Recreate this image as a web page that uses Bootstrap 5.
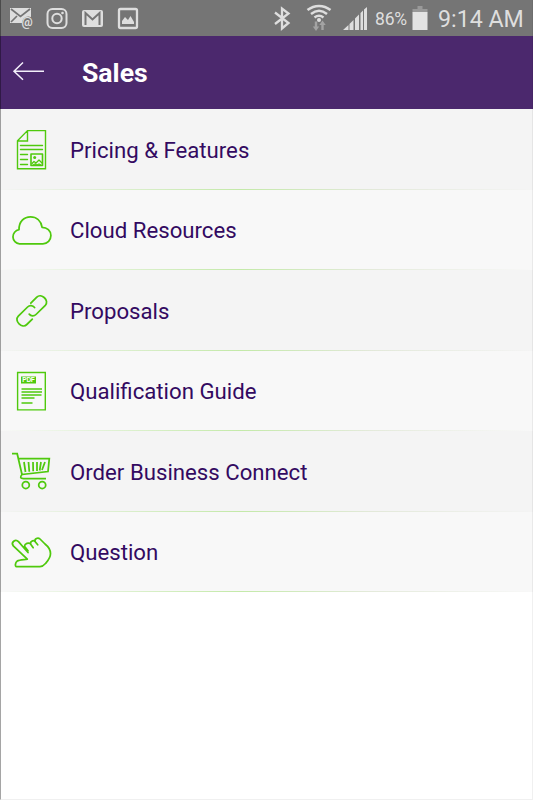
<!DOCTYPE html>
<html lang="en">
<head>
<meta charset="utf-8">
<meta name="viewport" content="width=device-width, initial-scale=1">
<title>Sales</title>
<link href="https://cdn.jsdelivr.net/npm/bootstrap@5.3.0/dist/css/bootstrap.min.css" rel="stylesheet">
<style>
body{font-family:Roboto,sans-serif;background:#fff;height:800px;overflow:hidden}
.screen-edge{inset:0;border-left:1px solid rgba(0,0,0,.35);border-right:1px solid rgba(0,0,0,.06);border-bottom:1px solid rgba(0,0,0,.06);pointer-events:none}
.status-strip{height:36px;background:#757575;color:#dedede}
.status-strip svg{display:block;flex:none}
.batt-text{font-size:17.5px;line-height:36px;width:36px;flex:none;margin-left:5px;margin-right:1px;padding-top:2px;white-space:nowrap;letter-spacing:-.2px}
.clock-text{font-size:23.2px;line-height:36px;margin-left:10px;padding-top:1px;white-space:nowrap}
.title-strip{height:73px;background:#4b286d;color:#fff}
.title-strip h1{font-size:26.6px;line-height:32px;font-weight:700;margin-left:22px;padding-top:1px}
.menu-row{height:80.5px;background:#f4f4f4;color:#330a61;font-size:22.2px;border:0;padding:0}
.menu-row:nth-child(even){background:#f8f8f8}
.menu-row::after{content:"";position:absolute;left:0;right:0;bottom:0;height:1px;background:linear-gradient(90deg,rgba(190,232,160,0),rgba(190,232,160,.9) 45%,rgba(215,225,200,.6) 70%,rgba(215,225,200,0))}
.menu-row svg{width:60px;height:80px;flex:none;fill:none;stroke:#4fc90d;stroke-width:1.75;stroke-linejoin:round;stroke-linecap:round}
.menu-row span{margin-left:10px;padding-top:3px;white-space:nowrap}
.menu-row:nth-child(even) span{padding-top:2px}
.pdf-tag{font:bold 6.5px "Liberation Sans",sans-serif;fill:#fff;stroke:none}
</style>
</head>
<body class="position-relative">
<div class="status-strip d-flex align-items-center">
  <svg width="260" height="36" fill="none" stroke="#dedede" stroke-width="2">
    <path d="M10 8h21v9c-5-2-9 2-9 6H10z" fill="#dedede" stroke="none"/>
    <path d="M11 9l9.500 7.500L30 9M11 22l6-6" stroke="#757575" stroke-width="1.700"/>
    <text x="21.500" y="26" font-size="12.500" font-weight="700" fill="#dedede" stroke="none">@</text>
    <rect x="47.500" y="9" width="19" height="19" rx="5"/>
    <circle cx="57" cy="18.500" r="4.700"/>
    <circle cx="62.500" cy="13" r="1.300" fill="#dedede" stroke="none"/>
    <rect x="82" y="10" width="21" height="17" rx="2" fill="#dedede" stroke="none"/>
    <path d="M85.500 25V13l7 6.500 7-6.500v12" stroke="#757575" stroke-width="2"/>
    <rect x="119" y="9" width="18" height="19" rx="1.500" stroke-width="2.300"/>
    <path d="M122 24v-3l3-4 3 3 2.500-4 3.500 6v2z" fill="#dedede" stroke="none"/>
  </svg>
  <svg width="110" height="36" viewBox="260 0 110 36" fill="none" stroke="#dedede" stroke-width="2.300">
    <path d="M275 12.500l13.500 10.500-6.500 5.500V8.500l6.500 5L275 24"/>
    <g stroke-width="2.500"><path d="M307.500 10c7-5.500 16-5.500 23 0M311 14c5-4 11-4 16 0M314.500 17.500c3-2.300 6-2.300 9 0"/></g>
    <circle cx="319" cy="20" r="2" fill="#dedede" stroke="none"/>
    <path d="M316 21.500v6M322.500 30v-6" stroke="#a3a3a3" stroke-width="2.400"/><path d="M312.800 26.500h6.400L316 31zM319.300 25h6.400l-3.200-4.500z" fill="#a3a3a3" stroke="none"/>
    <g fill="#dedede" stroke="none"><path d="M343 30l5.500-5v5zM349.500 30v-6l4-4V30zM355 30V18.500l4-4V30z"/><path d="M360.500 30V13l2.500-2.500V30zM364 30V9.500l3-2.500V30z"/></g>
  </svg>
  <div class="batt-text">86%</div>
  <svg width="16" height="36" viewBox="412 0 16 36"><path d="M417.500 6h5v3h5v3.500h-15V9h5z" fill="#999"/><path d="M412.500 12h15v18h-15z" fill="#e4e4e4"/></svg>
  <div class="clock-text">9:14 AM</div>
</div>
<header class="title-strip d-flex align-items-center">
  <svg width="60" height="73" viewBox="0 36 60 73" fill="none" stroke="#f3effa" stroke-width="1.500"><path d="M44 71.200H14M23 62.500l-9 8.700 9 8.600"/></svg>
  <h1 class="mb-0">Sales</h1>
</header>
<main class="list-group list-group-flush rounded-0">
  <a class="menu-row list-group-item d-flex align-items-center">
    <svg viewBox="0 109 60 80"><path stroke-linejoin="miter" stroke-width="1.400" d="M27.500 130.600h18v38.200h-28v-28zV141h-10M20.500 145.500h22M20.500 149.500h22M20.500 154.500h7M20.500 159.500h7M20.500 164.500h7"/><rect x="31" y="154" width="11.500" height="11.500" stroke-width="1.600"/><circle cx="34.700" cy="157.500" r="1.500" fill="#4fc90d" stroke="none"/><path d="M32 163.500l2-2 2 1.500 3-3 3 3M33 165l2-1 2 1 2-1 2 1" stroke-width="1.300"/></svg>
    <span>Pricing &amp; Features</span></a>
  <a class="menu-row list-group-item d-flex align-items-center">
    <svg viewBox="0 189.500 60 80"><path d="M19.500 243.300a7.100 7.100 0 0 1-.5-14.100C19 221 24 216.400 30.500 216.400c6 0 10.500 4 11.600 10.400 5 0 8.800 3.500 8.800 8.200s-3.400 8.300-8 8.300z"/></svg>
    <span>Cloud Resources</span></a>
  <a class="menu-row list-group-item d-flex align-items-center">
    <svg viewBox="0 270 60 80"><path d="M30.800 303.200l6-6.100c4.500-4.500 13 3.500 8.500 8.200l-9.300 9.200c-2 2-5 1.700-6.800-.3M32.300 319.200l-5.500 5.300c-4.600 4.500-13.200-3.500-8.500-8.300l9.300-9.200c2-2 5.200-1.700 7 .5"/></svg>
    <span>Proposals</span></a>
  <a class="menu-row list-group-item d-flex align-items-center">
    <svg viewBox="0 350.500 60 80"><path stroke-linejoin="miter" stroke-width="1.400" d="M17.600 372h27.700v37.400H17.600z"/><path d="M21 376h15v7H21z" fill="#4fc90d" stroke="none"/><text class="pdf-tag" x="22.300" y="381.900" textLength="12.500">PDF</text><path stroke-width="1.300" stroke-linecap="butt" d="M21.500 388.500h20.500M21.500 391.500h20.500M21.500 394.500h20M21.500 397.500h13M21.500 402.500h11"/></svg>
    <span>Qualification Guide</span></a>
  <a class="menu-row list-group-item d-flex align-items-center">
    <svg viewBox="0 431 60 80"><path stroke-linecap="butt" stroke-linejoin="miter" d="M12 453.700h5.200L22 474.500M18.300 458.500h31L48 471.500l-26 3c-2.500 3-1.500 4 1.500 4H46M24 462l1.500 10M28.500 462l.8 9.700M33 462l.2 9.200M37 462v9M41 462l-1.300 8.500M45 462l-3 8"/><circle cx="25.800" cy="485" r="3.500"/><circle cx="42.200" cy="485" r="3.500"/></svg>
    <span>Order Business Connect</span></a>
  <a class="menu-row list-group-item d-flex align-items-center">
    <svg viewBox="0 511.500 60 80"><path d="M28 552.500l-4-4.500-5.500-6.300c-3-3.200-8 .5-5.200 4.200l14 13.300c-4 .6-8 .7-10 1.800-2.200 1.400-2.500 5.700-.8 5.700H40c2.500 0 4-1.500 5.500-3.200 2.500-2.800 5-5.500 5-10 0-5-3-7.500-5.500-9.500l-5-5c-2-2-6-.5-4.800 2.800l2.500 3M35.200 541.500c-2-1.800-5.500 0-4.500 2.800l2.500 3.400M30.700 543.800c-2-1.600-6-.5-6.200 2.500l3.500 4.500" transform="translate(0 -.5)"/></svg>
    <span>Question</span></a>
</main>
<div class="screen-edge position-absolute"></div>
<script src="https://cdn.jsdelivr.net/npm/bootstrap@5.3.0/dist/js/bootstrap.bundle.min.js"></script>
</body>
</html>
